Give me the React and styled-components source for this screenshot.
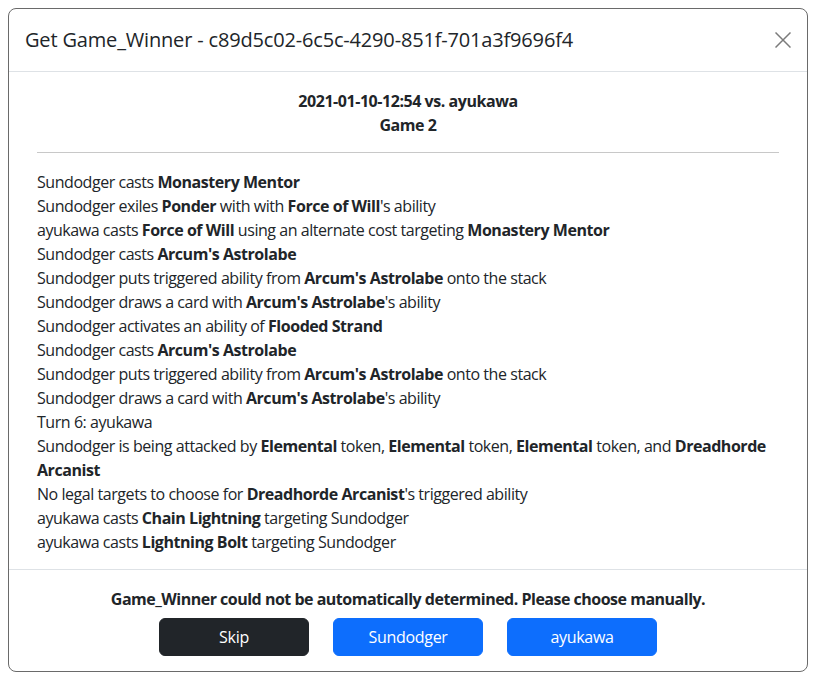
import React from "react";
import styled, { createGlobalStyle } from "styled-components";

const GlobalStyle = createGlobalStyle`
  html, body {
    margin: 0;
    padding: 0;
    background: #ffffff;
  }
  body {
    font-family: "Open Sans", "Noto Sans", sans-serif;
    color: #212529;
    font-size: 16px;
    line-height: 1.5;
  }
`;

const Page = styled.div`
  padding: 8px;
  width: 800px;
  height: 664px;
`;

const Modal = styled.div`
  width: 800px;
  height: 664px;
  box-sizing: border-box;
  border: 1px solid #6a6a6a;
  border-radius: 8px;
  background: #fff;
  display: flex;
  flex-direction: column;
  overflow: hidden;
`;

const Header = styled.div`
  display: flex;
  align-items: center;
  justify-content: space-between;
  padding: 16px 16px;
  border-bottom: 1px solid #dee2e6;
`;

const Title = styled.h5`
  margin: 0;
  font-size: 20px;
  font-weight: 400;
  line-height: 30px;
  letter-spacing: -0.17px;
`;

const CloseButton = styled.button`
  border: 0;
  background: transparent;
  width: 16px;
  height: 30px;
  padding: 0;
  display: flex;
  align-items: center;
  justify-content: center;
  color: #7b7b7b;
`;

const Body = styled.div`
  flex: 1;
  padding: 17px 28px 15px;
  letter-spacing: -0.45px;
`;

const Heading = styled.div`
  text-align: center;
  font-weight: 700;
`;

const Rule = styled.hr`
  margin: 15px 0 17px;
  border: 0;
  border-top: 1px solid #c8c8c8;
`;

const LogLine = styled.div`
  b {
    font-weight: 700;
  }
`;

const Footer = styled.div`
  border-top: 1px solid #dee2e6;
  padding: 17px 12px 15px;
  display: flex;
  flex-direction: column;
  align-items: center;
  gap: 7px;
`;

const Notice = styled.div`
  font-weight: 700;
  text-align: center;
  letter-spacing: -0.5px;
`;

const ButtonRow = styled.div`
  display: flex;
  gap: 24px;
`;

const Button = styled.button`
  width: 150px;
  height: 38px;
  border: 1px solid ${(p) => (p.$dark ? "#212529" : "#0d6efd")};
  background: ${(p) => (p.$dark ? "#212529" : "#0d6efd")};
  color: #fff;
  border-radius: 6px;
  font-family: inherit;
  font-size: 16px;
  letter-spacing: -0.3px;
  cursor: pointer;
`;

const log = [
  ["Sundodger casts ", <b>Monastery Mentor</b>],
  ["Sundodger exiles ", <b>Ponder</b>, " with with ", <b>Force of Will</b>, "'s ability"],
  ["ayukawa casts ", <b>Force of Will</b>, " using an alternate cost targeting ", <b>Monastery Mentor</b>],
  ["Sundodger casts ", <b>Arcum's Astrolabe</b>],
  ["Sundodger puts triggered ability from ", <b>Arcum's Astrolabe</b>, " onto the stack"],
  ["Sundodger draws a card with ", <b>Arcum's Astrolabe</b>, "'s ability"],
  ["Sundodger activates an ability of ", <b>Flooded Strand</b>],
  ["Sundodger casts ", <b>Arcum's Astrolabe</b>],
  ["Sundodger puts triggered ability from ", <b>Arcum's Astrolabe</b>, " onto the stack"],
  ["Sundodger draws a card with ", <b>Arcum's Astrolabe</b>, "'s ability"],
  ["Turn 6: ayukawa"],
  [
    "Sundodger is being attacked by ",
    <b>Elemental</b>,
    " token, ",
    <b>Elemental</b>,
    " token, ",
    <b>Elemental</b>,
    " token, and ",
    <b>Dreadhorde Arcanist</b>,
  ],
  ["No legal targets to choose for ", <b>Dreadhorde Arcanist</b>, "'s triggered ability"],
  ["ayukawa casts ", <b>Chain Lightning</b>, " targeting Sundodger"],
  ["ayukawa casts ", <b>Lightning Bolt</b>, " targeting Sundodger"],
];

const App = () => {
  return (
    <Page>
      <GlobalStyle />
      <Modal>
        <Header>
          <Title>Get Game_Winner - c89d5c02-6c5c-4290-851f-701a3f9696f4</Title>
          <CloseButton aria-label="Close">
            <svg width="16" height="16" viewBox="0 0 16 16">
              <path d="M0.5 0.5L15.5 15.5M15.5 0.5L0.5 15.5" stroke="currentColor" strokeWidth="1.5" fill="none" />
            </svg>
          </CloseButton>
        </Header>
        <Body>
          <Heading>2021-01-10-12:54 vs. ayukawa</Heading>
          <Heading>Game 2</Heading>
          <Rule />
          {log.map((parts, i) => (
            <LogLine key={i}>
              {parts.map((p, j) => (
                <React.Fragment key={j}>{p}</React.Fragment>
              ))}
            </LogLine>
          ))}
        </Body>
        <Footer>
          <Notice>Game_Winner could not be automatically determined. Please choose manually.</Notice>
          <ButtonRow>
            <Button $dark>Skip</Button>
            <Button>Sundodger</Button>
            <Button>ayukawa</Button>
          </ButtonRow>
        </Footer>
      </Modal>
    </Page>
  );
};

export default App;
